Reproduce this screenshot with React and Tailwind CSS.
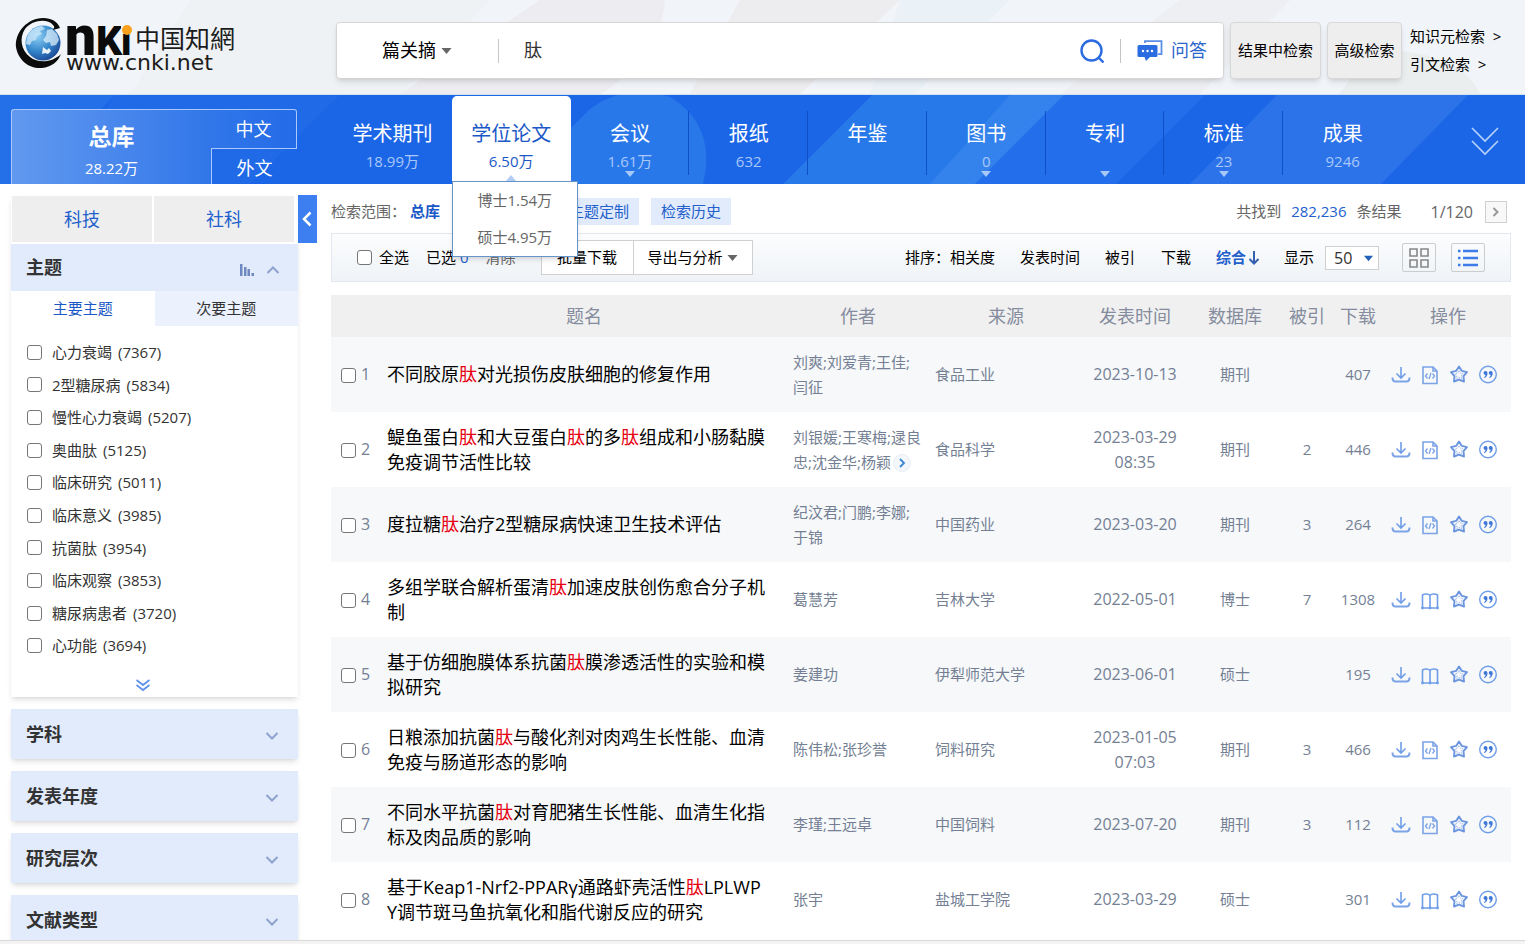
import React, { useState } from 'react'

const NAV_ITEMS = [
    { name: '学术期刊', count: '18.99万' },
    { name: '学位论文', count: '6.50万', active: true, menu: ['博士1.54万', '硕士4.95万'] },
    { name: '会议', count: '1.61万', arrow: true },
    { name: '报纸', count: '632' },
    { name: '年鉴', count: '' },
    { name: '图书', count: '0', arrow: true },
    { name: '专利', count: '', arrow: true },
    { name: '标准', count: '23', arrow: true },
    { name: '成果', count: '9246' },
]

const TOPICS = [
    ['心力衰竭', 7367],
    ['2型糖尿病', 5834],
    ['慢性心力衰竭', 5207],
    ['奥曲肽', 5125],
    ['临床研究', 5011],
    ['临床意义', 3985],
    ['抗菌肽', 3954],
    ['临床观察', 3853],
    ['糖尿病患者', 3720],
    ['心功能', 3694],
]

const GROUPS = ['学科', '发表年度', '研究层次', '文献类型']

const RESULTS = [
    { title: '不同胶原肽对光损伤皮肤细胞的修复作用', author: '刘爽;刘爱青;王佳;闫征', source: '食品工业', date: '2023-10-13', db: '期刊', cited: '', downloads: 407, html: true },
    { title: '鳀鱼蛋白肽和大豆蛋白肽的多肽组成和小肠黏膜免疫调节活性比较', author: '刘银媛;王寒梅;逯良忠;沈金华;杨颖', more: true, source: '食品科学', date: '2023-03-29 08:35', db: '期刊', cited: 2, downloads: 446, html: true },
    { title: '度拉糖肽治疗2型糖尿病快速卫生技术评估', author: '纪汶君;门鹏;李娜;于锦', source: '中国药业', date: '2023-03-20', db: '期刊', cited: 3, downloads: 264, html: true },
    { title: '多组学联合解析蛋清肽加速皮肤创伤愈合分子机制', author: '葛慧芳', source: '吉林大学', date: '2022-05-01', db: '博士', cited: 7, downloads: 1308 },
    { title: '基于仿细胞膜体系抗菌肽膜渗透活性的实验和模拟研究', author: '姜建功', source: '伊犁师范大学', date: '2023-06-01', db: '硕士', cited: '', downloads: 195 },
    { title: '日粮添加抗菌肽与酸化剂对肉鸡生长性能、血清免疫与肠道形态的影响', author: '陈伟松;张珍誉', source: '饲料研究', date: '2023-01-05 07:03', db: '期刊', cited: 3, downloads: 466, html: true },
    { title: '不同水平抗菌肽对育肥猪生长性能、血清生化指标及肉品质的影响', author: '李瑾;王远卓', source: '中国饲料', date: '2023-07-20', db: '期刊', cited: 3, downloads: 112, html: true },
    { title: '基于Keap1-Nrf2-PPARγ通路虾壳活性肽LPLWPY调节斑马鱼抗氧化和脂代谢反应的研究', author: '张宇', source: '盐城工学院', date: '2023-03-29', db: '硕士', cited: '', downloads: 301 },
]

const boxClass = 'size-[15px] shrink-0 appearance-none rounded-[3px] border border-[#767676] bg-white checked:bg-[#2b72ea]'

const Triangle = ({ className }) => (
    <svg viewBox="0 0 10 6" className={className} fill="currentColor" aria-hidden="true"><path d="M0 0h10L5 6z" /></svg>
)

const Chevron = ({ className, up }) => (
    <svg viewBox="0 0 14 10" className={className} fill="none" stroke="currentColor" strokeWidth="2" aria-hidden="true">
        <path d={up ? 'M1.500 8L7 2.500L12.500 8' : 'M1.500 2L7 7.500L12.500 2'} />
    </svg>
)

const Logo = () => (
    <svg viewBox="0 0 226 58" className="h-[58px] w-[226px] overflow-visible" role="img" aria-label="CNKI 中国知網">
        <defs>
            <radialGradient id="globe" cx="0.35" cy="0.3" r="0.8">
                <stop offset="0" stopColor="#8fd0f5" />
                <stop offset="0.55" stopColor="#3485cb" />
                <stop offset="1" stopColor="#173f8c" />
            </radialGradient>
        </defs>
        <circle cx="27" cy="27" r="17.500" fill="url(#globe)" />
        <path d="M13 17q6-7 13-7l3 3-5 2 2 3-5 2-1 4-4 1-2 4-4-1q0-6 3-11z" fill="#cfeafa" opacity=".75" />
        <path d="M31 14l5-1 5 5 2 6-3 5-5 1-1-4-4 1-3-3 3-4z" fill="#e6f4fc" opacity=".7" />
        <path d="M27 31l4 3 2-2 2 3-3 3-3-1-3 1z" fill="#fff" opacity=".9" />
        <path d="M44 12C41 3 30 0 20 3C7 7-1 19 0 31C2 44 13 53 26 52C35 51 42 46 45 38C37 46 23 48 14 41C5 34 3 22 9 13C16 4 31 2 37 9C39 11 38 12 37 14z" fill="#0b0b0b" />
        <text x="49" y="39" fontSize="55" fontWeight="900" fontFamily="Roboto, sans-serif" fill="#0b0b0b">n</text>
        <text x="80" y="39" fontSize="41" fontWeight="900" fontFamily="Roboto, sans-serif" fill="#0b0b0b">K</text>
        <text x="105" y="39" fontSize="38" fontWeight="900" fontFamily="Roboto, sans-serif" fill="#0b0b0b">i</text>
        <rect x="105" y="8" width="12" height="10" fill="#f2f4f7" />
        <circle cx="111" cy="14" r="5" fill="#f9a11b" />
        <text x="119" y="32" fontSize="25" fontFamily="'Noto Sans CJK TC', sans-serif" fill="#1c1c1c">中国知網</text>
        <text x="50" y="54" fontSize="22" fontFamily="'DejaVu Sans', sans-serif" fill="#1c1c1c">www.cnki.net</text>
    </svg>
)

const iconClass = 'size-5'

const DownloadIcon = () => (
    <svg viewBox="0 0 20 20" className={iconClass} fill="none" stroke="#7ba3e6" strokeWidth="1.600">
        <path d="M10 2v10.500M5.500 8.500L10 13l4.500-4.500" stroke="#6f9de8" />
        <path d="M1.500 12.500c0 3 1 4 3 4h11c2 0 3-1 3-4" strokeWidth="2" />
    </svg>
)

const HtmlIcon = () => (
    <svg viewBox="0 0 20 20" className={iconClass} fill="none" stroke="#7ba3e6" strokeWidth="1.600">
        <path d="M3 2h10l4 4v12.500H3z" />
        <path d="M13 2v4h4" />
        <path d="M7.500 8.500L5.500 11l2 2.500M12.500 8.500l2 2.500-2 2.500M11 8l-2 6" strokeWidth="1.300" />
    </svg>
)

const BookIcon = () => (
    <svg viewBox="0 0 20 20" className={iconClass} fill="none" stroke="#6f9de8" strokeWidth="1.600">
        <path d="M10 5.500C8.500 3.600 5 3.500 2.500 5v13h15V5C15 3.500 11.500 3.600 10 5.500zM10 5.500V18" />
        <circle cx="2.500" cy="18" r=".6" /><circle cx="10" cy="18" r=".6" /><circle cx="17.500" cy="18" r=".6" />
    </svg>
)

const StarIcon = () => (
    <svg viewBox="0 0 20 20" className={iconClass} fill="none" stroke="#6b95de" strokeWidth="1.900" strokeLinejoin="round">
        <path d="M10 1.500l2.700 4.300 5.300 1.300-3.500 4 .500 5.400L10 14.700 5 16.500l.500-5.400-3.500-4 5.300-1.300z" />
        <path d="M10 5.500l1.400 2.600 2.600.6-1.800 2.200.200 2.600L10 12.500l-2.400 1 .200-2.600L6 8.700l2.600-.6z" strokeWidth=".9" strokeDasharray="1.500 1" opacity=".7" />
    </svg>
)

const QuoteIcon = () => (
    <svg viewBox="0 0 20 20" className={iconClass}>
        <circle cx="10" cy="9.500" r="8.300" fill="none" stroke="#6f9de8" strokeWidth="1.400" />
        <g fill="#3f78d8">
            <path d="M5.500 8a2 2 0 1 1 4 0q0 3.500-3 5l-.5-.8q1.500-1 1.500-2.300Q5.500 9.800 5.500 8z" />
            <path d="M10.700 8a2 2 0 1 1 4 0q0 3.500-3 5l-.5-.8q1.500-1 1.500-2.300-2-.1-2-1.900z" />
        </g>
    </svg>
)

const SearchHeader = () => (
    <header className="relative flex h-[95px] items-start overflow-hidden border-b border-[#d3e2ee] bg-[#f1f4f8]">
        <svg className="absolute inset-0 h-full w-full" viewBox="0 0 1525 95" preserveAspectRatio="none" aria-hidden="true">
            <path d="M190 0H490L400 95H130z" fill="#eff2f5" />
            <path d="M540 0H665Q660 60 600 95H400z" fill="#edecf0" />
            <path d="M740 0H900L800 95H690z" fill="#edecef" />
            <path d="M900 0H1010L915 95H870z" fill="#ebf2f7" />
            <path d="M1180 0H1290L1200 95H1060z" fill="#edeff2" />
            <path d="M1370 50Q1460 50 1480 95H1340z" fill="#ebeeee" />
        </svg>
        <a href="#home" className="relative mt-4 ml-4 w-80"><Logo /></a>
        <form className="relative mt-[22px] flex h-[57px] flex-1 items-center rounded-sm border border-[#d5d5d5] bg-white shadow-md" onSubmit={(e) => e.preventDefault()}>
            <div className="relative ml-[45px]">
                <select aria-label="检索项" className="appearance-none bg-transparent pr-6 text-[18px] text-black outline-none" defaultValue="篇关摘">
                    <option>篇关摘</option>
                </select>
                <Triangle className="pointer-events-none absolute top-1/2 right-2 h-[6px] w-[11px] -translate-y-1/2 text-[#666]" />
            </div>
            <span className="ml-[38px] h-6 w-px bg-[#c8c8c8]" />
            <input aria-label="检索词" defaultValue="肽" className="ml-[25px] min-w-0 flex-1 bg-transparent text-[18px] text-[#333] outline-none" />
            <button type="submit" aria-label="检索">
                <svg viewBox="0 0 24 24" className="size-6" fill="none" stroke="#2b6ce0" strokeWidth="2.400">
                    <circle cx="11.500" cy="11.500" r="10" /><path d="M18.500 18.500l5 5" />
                </svg>
            </button>
            <span className="ml-4 h-6 w-px bg-[#c4c4c4]" />
            <button type="button" className="mr-4 ml-4 flex items-center gap-2 text-[18px] text-[#2b66cc]">
                <svg viewBox="0 0 26 22" className="h-[22px] w-[26px]">
                    <path d="M8 3V1.200h16.500v13H21" fill="none" stroke="#5b8ee6" strokeWidth="1.800" />
                    <path d="M2 5h17a1.500 1.500 0 0 1 1.500 1.500v9A1.500 1.500 0 0 1 19 17h-6l-4 4-1.500-4H2A1.500 1.500 0 0 1 .5 15.500v-9A1.500 1.500 0 0 1 2 5z" fill="#2b6ce0" />
                    <g fill="#fff"><circle cx="6" cy="11" r="1.200" /><circle cx="10.500" cy="11" r="1.200" /><circle cx="15" cy="11" r="1.200" /></g>
                </svg>
                问答
            </button>
        </form>
        <button className="relative mt-[22px] ml-1.5 h-[57px] w-[91px] rounded-sm border border-[#d8d8d8] bg-[#eee] text-[15px] whitespace-nowrap text-black shadow-md">结果中检索</button>
        <button className="relative mt-[22px] ml-1.5 h-[57px] w-[75px] rounded-sm border border-[#d8d8d8] bg-[#eee] text-[15px] whitespace-nowrap text-black shadow-md">高级检索</button>
        <div className="relative mt-[22px] ml-2 flex w-[115px] flex-col text-[15px] leading-7 whitespace-nowrap text-black">
            <a href="#knowledge">知识元检索&nbsp; &gt;</a>
            <a href="#citation">引文检索&nbsp; &gt;</a>
        </div>
    </header>
)

const NavItem = ({ item, divider }) => (
    <div className="relative flex-1">
        <a
            href="#type"
            className={item.active
                ? 'mt-px flex h-[88px] flex-col items-center rounded-t-[5px] bg-white pt-[23px] text-[#1b58c7]'
                : 'flex h-full flex-col items-center pt-6 text-white'}
        >
            <span className="text-[20px] leading-[30px]">{item.name}</span>
            <span className={item.active ? 'text-[15px] leading-6' : 'text-[15px] leading-6 text-[#a9c8fa]'}>{item.count}</span>
        </a>
        {divider && <span className="absolute top-4 right-0 h-16 w-px bg-[#0f4fc9]" />}
        {item.arrow && <Triangle className="absolute bottom-[7px] left-1/2 h-[6px] w-[11px] -translate-x-1/2 text-[#a9c8fa]" />}
        {item.menu && (
            <>
                <Triangle className="absolute bottom-[3px] left-1/2 h-[6px] w-[11px] -translate-x-1/2 rotate-180 text-[#b3ccf5]" />
                <ul className="absolute top-[86px] left-0 z-20 w-[126px] border border-[#6694c8] bg-white text-center text-[15px] leading-[37px] text-[#666] shadow-md">
                    {item.menu.map((m) => <li key={m}><a href="#degree">{m}</a></li>)}
                </ul>
            </>
        )}
    </div>
)

const LibraryNav = () => (
    <nav className="relative flex h-[89px] bg-[#1b66e6]">
        <svg className="absolute inset-0 h-full w-full" viewBox="0 0 1525 89" preserveAspectRatio="none" aria-hidden="true">
            <path d="M0 0H115L26 89H0z" fill="#2470e8" />
            <path d="M115 0H340L250 89H60z" fill="#2069e7" />
            <path d="M569 35L590 14Q625-12 670 2Q717 30 703 89H569z" fill="#2878ea" />
            <path d="M872 0H1090L1000 89H783z" fill="#2779ea" />
            <path d="M1010 0H1064L975 89H930z" fill="#3483ec" />
            <path d="M1064 0H1205L1116 89H975z" fill="#236eea" />
            <path d="M1277 0H1468L1381 89H1190z" fill="#2c73ea" />
        </svg>
        <div className="relative mt-[14px] ml-[11px] flex w-[286px]">
            <a href="#all" className="flex w-[200px] flex-col items-center rounded-tl-[3px] border-t border-l border-[#a9c9fb] bg-linear-to-r from-[#6199ef] to-[#3176e9] pt-2 text-white">
                <span className="text-[23px] leading-9 font-bold">总库</span>
                <span className="text-[15px] leading-7">28.22万</span>
            </a>
            <div className="flex flex-1 flex-col text-center text-[18px] text-white">
                <a href="#cn" className="h-10 rounded-tr-[3px] border-t border-r border-b border-[#a9c9fb] bg-linear-to-r from-[#3176e9] to-[#236be8] leading-[38px]">中文</a>
                <a href="#foreign" className="-mt-px flex-1 border-l border-[#a9c9fb] pt-1 leading-8">外文</a>
            </div>
        </div>
        <div className="relative ml-9 flex flex-1">
            {NAV_ITEMS.map((item, i) => <NavItem key={item.name} item={item} divider={i > 1 && i < 8} />)}
        </div>
        <button aria-label="展开" className="relative mt-[31px] mr-[26px] ml-[69px] h-[30px] w-7 text-[#b8d2fb]">
            <svg viewBox="0 0 28 30" fill="none" stroke="currentColor" strokeWidth="1.600"><path d="M1 2l13 13L27 2M1 15l13 13 13-13" /></svg>
        </button>
    </nav>
)

const Sidebar = () => (
    <aside className="mt-3 ml-[11px] w-[287px] shrink-0">
        <section className="bg-white shadow-md">
            <div className="flex gap-0.5 pr-1 pb-0.5 pl-px text-[18px] text-[#2360cc]">
                <button className="h-[46px] flex-1 bg-[#eee]">科技</button>
                <button className="h-[46px] flex-1 bg-[#eee]">社科</button>
            </div>
            <div className="flex h-[47px] items-center bg-[#e1ebfc] px-[15px]">
                <h2 className="flex-1 text-[18px] font-bold text-[#333]">主题</h2>
                <svg viewBox="0 0 14 12" className="mt-1 mr-3 h-3 w-[14px]" fill="#6f8ac0"><path d="M0 0h2.500v12H0zM4 3h2.500v9H4zM7.500 5H10v7H7.500zM11.500 9H14v3h-2.500z" /></svg>
                <Chevron up className="mt-1 mr-[3px] h-[10px] w-[14px] text-[#8da3cf]" />
            </div>
            <div className="grid grid-cols-2 text-[15px]">
                <button className="h-[35px] text-[#1b58c7]">主要主题</button>
                <button className="h-[35px] bg-[#ebf1fd] text-[#333]">次要主题</button>
            </div>
            <ul className="mt-2.5 grid h-[326px] grid-rows-10 pl-4 text-[15px] text-[#333]">
                {TOPICS.map(([name, count]) => (
                    <li key={name} className="flex items-center">
                        <label className="flex items-center">
                            <input type="checkbox" className={boxClass} />
                            <span className="ml-2.5">{name}</span>
                            <span className="ml-1.5">({count})</span>
                        </label>
                    </li>
                ))}
            </ul>
            <button aria-label="更多" className="mx-auto block pt-[17px] pr-6 pb-[5px]">
                <svg viewBox="0 0 14 12" className="h-[13px] w-[14px]" fill="none" stroke="#5f92ea" strokeWidth="1.800"><path d="M.5 .5L7 5.500L13.500 .5M.5 5.500L7 10.500L13.500 5.500" /></svg>
            </button>
        </section>
        {GROUPS.map((group) => (
            <section key={group} className="mt-3 flex h-[50px] items-center bg-[#e1ebfc] px-[15px] shadow-md">
                <h2 className="flex-1 text-[18px] font-bold text-[#333]">{group}</h2>
                <Chevron className="mt-1 mr-1 h-[10px] w-[14px] text-[#8da3cf]" />
            </section>
        ))}
    </aside>
)

const Toolbar = () => (
    <div className="flex h-[49px] items-center border border-[#e3e8ee] bg-linear-to-b from-[#fcfdfe] to-[#eff3f7] text-[15px] whitespace-nowrap text-black">
        <label className="ml-[25px] flex items-center gap-[7px]"><input type="checkbox" className={boxClass} />全选</label>
        <span className="ml-[17px]">已选 <span className="text-[#2360cc]">0</span></span>
        <button className="ml-[17px] w-[30px] text-[#666]">清除</button>
        <button className="ml-[25px] h-[35px] w-[93px] border border-[#d0d0d0] bg-white">批量下载</button>
        <button className="-ml-px flex h-[35px] w-[120px] items-center justify-center gap-1 border border-[#d0d0d0] bg-white">
            导出与分析<Triangle className="h-[6px] w-[11px] text-[#666]" />
        </button>
        <div className="ml-auto flex items-center">
            <span>排序：</span>
            <a href="#rel">相关度</a>
            <a href="#time" className="ml-[25px]">发表时间</a>
            <a href="#cited" className="ml-[25px]">被引</a>
            <a href="#down" className="ml-[26px]">下载</a>
            <a href="#all-sort" className="ml-[25px] flex items-center font-bold text-[#2360cc]">
                综合
                <svg viewBox="0 0 12 14" className="ml-0.5 h-[14px] w-3" fill="none" stroke="#3560b0" strokeWidth="2"><path d="M6 0v12.500M1.500 8L6 12.500 10.500 8" /></svg>
            </a>
            <label htmlFor="size" className="ml-6">显示</label>
            <div className="relative ml-[11px]">
                <select id="size" defaultValue="50" className="block h-6 w-[54px] appearance-none border border-[#d0d0d0] bg-white pl-2 text-[16px] leading-5 text-[#333]">
                    <option>50</option>
                </select>
                <Triangle className="pointer-events-none absolute top-[9px] right-[6px] h-[7px] w-[9px] text-[#2360b8]" />
            </div>
            <button aria-label="网格" className="mr-[15px] ml-[23px] flex h-[29px] w-[34px] items-center justify-center rounded-xs border border-[#ccc]">
                <svg viewBox="0 0 20 20" className="size-5" fill="none" stroke="#888" strokeWidth="1.600"><path d="M1 1h7v7H1zM12 1h7v7h-7zM1 12h7v7H1zM12 12h7v7h-7z" /></svg>
            </button>
            <button aria-label="列表" className="mr-[25px] flex h-[29px] w-[34px] items-center justify-center rounded-xs border border-[#ccc]">
                <svg viewBox="0 0 20 18" className="h-[18px] w-5" stroke="#3c7be8" strokeWidth="2.600"><path d="M0 2h2.500M5 2h15M0 9h2.500M5 9h15M0 16h2.500M5 16h15" /></svg>
            </button>
        </div>
    </div>
)

const Highlight = ({ text }) => text.split(/(肽)/).map((part, i) => (
    part === '肽' ? <span key={i} className="text-[#e60012]">肽</span> : part
))

const ResultTable = () => (
    <table className="mt-[13px] w-full table-fixed text-[15px] leading-[25px] text-[#747f94]">
        <colgroup>
            <col className="w-14" />
            <col />
            <col className="w-[142px]" />
            <col className="w-[154px]" />
            <col className="w-[104px]" />
            <col className="w-24" />
            <col className="w-12" />
            <col className="w-[54px]" />
            <col className="w-[126px]" />
        </colgroup>
        <thead>
            <tr className="h-[42px] bg-[#f0f0f0] text-[18px] whitespace-nowrap text-[#848c9e]">
                <th />
                <th className="pr-1.5 font-normal">题名</th>
                <th className="font-normal">作者</th>
                <th className="font-normal">来源</th>
                <th className="font-normal">发表时间</th>
                <th className="font-normal">数据库</th>
                <th className="font-normal">被引</th>
                <th className="font-normal">下载</th>
                <th className="font-normal">操作</th>
            </tr>
        </thead>
        <tbody>
            {RESULTS.map((row, i) => (
                <tr key={row.title} className="h-[75px] odd:bg-[#f6f8fa]">
                    <td className="pl-2.5">
                        <label className="flex items-center gap-[5px]">
                            <input type="checkbox" className={`${boxClass} mt-0.5`} />
                            <span className="text-[16px]">{i + 1}</span>
                        </label>
                    </td>
                    <td className="pr-5 text-[18px] break-all text-black"><a href="#detail"><Highlight text={row.title} /></a></td>
                    <td className="px-1.5 break-all">
                        {row.author}
                        {row.more && (
                            <button aria-label="更多作者" className="ml-0.5 inline-flex size-[18px] items-center justify-center rounded-full border border-[#e9eef5] bg-[#f3f6fa] align-middle text-[#3a85d0]">
                                <svg viewBox="0 0 8 10" className="h-[10px] w-2" fill="none" stroke="currentColor" strokeWidth="1.800"><path d="M2 1l4 4-4 4" /></svg>
                            </button>
                        )}
                    </td>
                    <td className="px-1.5">{row.source}</td>
                    <td className="px-2 text-center text-[16px]">{row.date}</td>
                    <td className="text-center">{row.db}</td>
                    <td className="text-center">{row.cited}</td>
                    <td className="text-center">{row.downloads}</td>
                    <td className="pl-1.5">
                        <div className="flex gap-[9px]">
                            <button aria-label="下载"><DownloadIcon /></button>
                            <button aria-label="阅读">{row.html ? <HtmlIcon /> : <BookIcon />}</button>
                            <button aria-label="收藏"><StarIcon /></button>
                            <button aria-label="引用"><QuoteIcon /></button>
                        </div>
                    </td>
                </tr>
            ))}
        </tbody>
    </table>
)

const App = () => {
    const [open, setOpen] = useState(true);

    return (
        <div className="flex h-screen flex-col overflow-hidden bg-white font-['Open_Sans','Noto_Sans_CJK_SC',sans-serif]">
            <SearchHeader />
            <div className="relative z-10"><LibraryNav /></div>
            <div className="flex min-h-0 flex-1 items-start overflow-hidden">
                {open && <Sidebar />}
                <button aria-label="收起" onClick={() => setOpen(!open)} className="mt-[11px] flex h-12 w-[19px] shrink-0 items-center justify-center bg-[#3d7ff0] pr-0.5 text-white">
                    <svg viewBox="0 0 10 16" className="h-4 w-[10px]" fill="none" stroke="currentColor" strokeWidth="2.500"><path d="M8.500 1.500L2 8l6.500 6.500" /></svg>
                </button>
                <main className="mr-[14px] ml-[14px] min-w-0 flex-1">
                    <div className="flex h-[49px] items-center pt-1.5 text-[15px] text-[#666]">
                        <span>检索范围：</span>
                        <span className="ml-1 font-bold text-[#1b58c7]">总库</span>
                        <a href="#custom" className="ml-[119px] bg-[#e1ebfc] px-2.5 leading-[27px] text-[#2360cc]">主题定制</a>
                        <a href="#history" className="ml-3 bg-[#e1ebfc] px-2.5 leading-[27px] text-[#2360cc]">检索历史</a>
                        <span className="ml-auto">共找到</span>
                        <span className="mx-2.5 text-[#2360cc]">282,236</span>
                        <span>条结果</span>
                        <span className="ml-[29px] text-[16px]">1/120</span>
                        <button aria-label="下一页" className="mr-1 ml-3 flex size-[22px] items-center justify-center border border-[#d0d0d0] bg-[#f8f8f8] text-[#999]">
                            <svg viewBox="0 0 8 10" className="h-[10px] w-2" fill="none" stroke="currentColor" strokeWidth="2"><path d="M1.500 1l4 4-4 4" /></svg>
                        </button>
                    </div>
                    <Toolbar />
                    <ResultTable />
                </main>
            </div>
            <div className="h-1 shrink-0 border-t border-[#d9d9d9] bg-[#f3f3f3]" />
        </div>
    )
}

export default App
